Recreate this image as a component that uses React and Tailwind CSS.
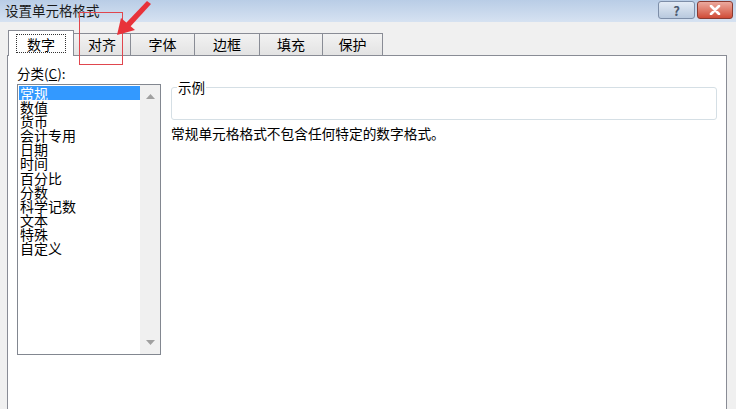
import React from "react";

const items = ["常规","数值","货币","会计专用","日期","时间","百分比","分数","科学记数","文本","特殊","自定义"];

function Tab({ label, w, first }) {
  return (
    <div
      className={`h-[22px] flex items-center justify-center border-t border-r border-[#898c95] bg-gradient-to-b from-[#f2f2f2] to-[#e3e3e3] text-[14px] text-black ${first ? "border-l" : ""}`}
      style={{ width: w }}
    >
      {label}
    </div>
  );
}

export default function App() {
  return (
    <div
      className="relative w-[736px] h-[409px] overflow-hidden bg-[#f0f0f0] text-black"
      style={{ fontFamily: '"Noto Sans CJK SC", "Liberation Sans", sans-serif' }}
    >
      {/* title bar */}
      <div className="h-[22px] flex items-start justify-between bg-gradient-to-b from-[#b9cde6] to-[#d6e2f1] pl-[5px] pr-[3px]">
        <div className="text-[13.5px] leading-[20px] text-[#1a1a1a]">设置单元格格式</div>
        <div className="flex gap-[2px] pt-[1px]">
          <div className="w-[37px] h-[18px] rounded-[3px] border border-[#7d8ea8] bg-gradient-to-b from-[#e3ebf5] to-[#b8c9de] flex items-center justify-center text-[13px] font-bold text-[#4a5a70] leading-none">?</div>
          <div className="w-[36px] h-[18px] rounded-[3px] border border-[#8a3a30] bg-gradient-to-b from-[#eba99e] to-[#cf4a36] flex items-center justify-center">
            <svg width="12" height="10" viewBox="0 0 12 10">
              <path d="M2 1 L10 9 M10 1 L2 9" stroke="#fff" strokeWidth="2.6" strokeLinecap="round" />
            </svg>
          </div>
        </div>
      </div>

      {/* tab area */}
      <div className="pl-[7px] pr-[9px] pt-[8px]">
        <div className="flex items-end h-[25px] pl-[1px]">
          <div className="relative z-10 w-[66px] h-[26px] -mb-px bg-white border-t border-l border-r border-[#898c95] flex items-center justify-center">
            <div className="px-[10px] h-[19px] border border-dotted border-[#333] flex items-center text-[14px] leading-none">数字</div>
          </div>
          <Tab label="对齐" w={57} />
          <Tab label="字体" w={64} />
          <Tab label="边框" w={65} />
          <Tab label="填充" w={63} />
          <Tab label="保护" w={60} />
        </div>

        {/* panel */}
        <div className="h-[360px] bg-white border-t border-l border-r border-[#898c95] pl-[9px] pr-[9px] pt-[9px] flex gap-[10px]">
          <div className="flex flex-col w-[144px]">
            <div className="text-[13.5px] leading-[16px] h-[19px]">分类(<span className="underline">C</span>):</div>
            <div className="h-[271px] border border-[#828790] flex">
              <div className="flex-1 pt-[1px] pl-[1px]">
                {items.map((it, i) => (
                  <div
                    key={it}
                    className={`h-[14.1px] leading-[14px] text-[14px] pl-[1px] whitespace-nowrap ${i === 0 ? "bg-[#3399ff] text-white" : ""}`}
                  >
                    {it}
                  </div>
                ))}
              </div>
              <div className="w-[20px] bg-[#f0f0f0] flex flex-col justify-between items-center py-[9px]">
                <svg width="9" height="5" viewBox="0 0 9 5"><path d="M0 5 L4.5 0 L9 5Z" fill="#a0a0a0" /></svg>
                <svg width="9" height="5" viewBox="0 0 9 5"><path d="M0 0 L4.5 5 L9 0Z" fill="#a0a0a0" /></svg>
              </div>
            </div>
          </div>
          <div className="flex-1 flex flex-col">
            <fieldset className="mt-[14px] h-[41px] border border-[#d5dfe5] rounded-[3px] px-[5px]">
              <legend className="text-[13.5px] leading-[16px] px-[1px] text-black">示例</legend>
            </fieldset>
            <div className="mt-[4px] text-[13.7px] leading-[18px]">常规单元格格式不包含任何特定的数字格式。</div>
          </div>
        </div>
      </div>

      {/* red annotation */}
      <div className="absolute left-[79px] top-[12px] w-[44px] h-[53px] border border-[#e0464e]" />
      <svg className="absolute left-0 top-0" width="160" height="50" viewBox="0 0 160 50">
        <path d="M151 4 L147 1 L126 23 L130 27 Z" fill="#e8323a" />
        <path d="M117 35 L121 18 L135 30 Z" fill="#e8323a" />
      </svg>
    </div>
  );
}
